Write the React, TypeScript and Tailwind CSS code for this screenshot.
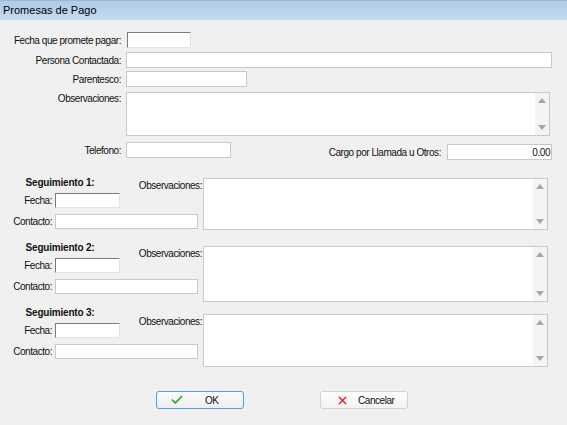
import { Check, X } from "lucide-react";

type Seg = { n: number; ta: string; lbl: string };

const segs: Seg[] = [
  { n: 1, ta: "mt-[2px] h-[52px]", lbl: "mt-[3px]" },
  { n: 2, ta: "mt-[5px] h-[56px]", lbl: "mt-[6px]" },
  { n: 3, ta: "mt-[8px] h-[53px]", lbl: "mt-[9px]" },
];

function Box({ className = "", sunken = false, children }: { className?: string; sunken?: boolean; children?: React.ReactNode }) {
  const border = sunken
    ? "border border-t-[#7a7a7a] border-l-[#7a7a7a] border-r-[#e3e3e3] border-b-[#e3e3e3]"
    : "border border-[#c9c9c9]";
  return <div className={`bg-white shrink-0 ${border} ${className}`}>{children}</div>;
}

function Memo({ className = "" }: { className?: string }) {
  return (
    <div className={`bg-white border border-[#c9c9c9] flex justify-end shrink-0 ${className}`}>
      <div className="w-[14px] bg-[#f4f4f4] flex flex-col items-center justify-between py-[5px]">
        <svg width="8" height="5" viewBox="0 0 8 5">
          <path d="M4 0 L8 5 L0 5 Z" fill="#a6a6a6" />
        </svg>
        <svg width="8" height="5" viewBox="0 0 8 5">
          <path d="M0 0 L8 0 L4 5 Z" fill="#a6a6a6" />
        </svg>
      </div>
    </div>
  );
}

function Row({ label, className = "", children }: { label: string; className?: string; children: React.ReactNode }) {
  return (
    <div className={`flex ${className}`}>
      <div className="w-[122px] flex justify-end whitespace-nowrap pr-[1px]">{label}</div>
      <div className="ml-[4px] flex flex-1">{children}</div>
    </div>
  );
}

export default function App() {
  return (
    <div
      className="w-[567px] h-[425px] bg-[#f0f0f0] text-[10px] leading-[13px] tracking-[-0.45px] text-[#111] overflow-hidden"
      style={{ fontFamily: "'Liberation Sans', Arial, sans-serif" }}
    >
      {/* title bar */}
      <div className="h-[20px] border-t border-[#9db8d5] bg-gradient-to-b from-[#b0cae5] to-[#c5dbf0] flex items-center px-[3px] text-[11px] tracking-normal text-black">
        Promesas de Pago
      </div>

      <div className="pr-[15px]">
        <Row label="Fecha que promete pagar:" className="mt-[12px] items-center">
          <Box sunken className="ml-[1px] w-[64px] h-[16px]" />
        </Row>
        <Row label="Persona Contactada:" className="mt-[4px] items-center">
          <Box className="flex-1 h-[16px]" />
        </Row>
        <Row label="Parentesco:" className="mt-[3px] items-center">
          <Box className="w-[121px] h-[16px]" />
        </Row>
        <Row label="Observaciones:" className="mt-[5px] items-start">
          <Memo className="flex-1 mr-[2px] h-[44px]" />
        </Row>
        <div className="flex items-start mt-[6px]">
          <div className="w-[122px] text-right pr-[1px] mt-[2px]">Telefono:</div>
          <Box className="ml-[4px] w-[105px] h-[16px]" />
          <div className="ml-auto flex items-center mt-[2px]">
            <span className="whitespace-nowrap">Cargo por Llamada u Otros:</span>
            <Box className="ml-[6px] w-[105px] h-[16px] flex items-center justify-end pr-[1px]">
              0.00
            </Box>
          </div>
        </div>
      </div>

      {/* seguimientos */}
      <div className="mt-[16px]">
        {segs.map((s) => (
          <div key={s.n} className="h-[65px] grid grid-cols-[137px_66px_345px] grid-rows-[32px_33px]">
            <div>
              <div className="w-[120px] text-center font-bold tracking-[-0.2px]">Seguimiento {s.n}:</div>
              <div className="flex items-center mt-[4px]">
                <div className="w-[52px] text-right">Fecha:</div>
                <Box sunken className="ml-[3px] w-[65px] h-[15px]" />
              </div>
            </div>
            <div className={`flex justify-end whitespace-nowrap pr-[1px] ${s.lbl}`}>Observaciones:</div>
            <div className="row-span-2">
              <Memo className={s.ta} />
            </div>
            <div className="col-span-2 flex items-center mt-[6px] self-start">
              <div className="w-[52px] text-right">Contacto:</div>
              <Box className="ml-[3px] w-[143px] h-[15px]" />
            </div>
          </div>
        ))}
      </div>

      {/* buttons */}
      <div className="flex gap-[76px] pl-[156px] mt-[20px]">
        <button className="w-[88px] h-[18px] rounded-[3px] border border-[#4ea2ea] bg-gradient-to-b from-[#fbfbfb] to-[#eeeeee] flex items-center pl-[13px]">
          <Check size={14} strokeWidth={2.6} color="#1f9a1f" />
          <span className="ml-[21px]">OK</span>
        </button>
        <button className="w-[88px] h-[18px] rounded-[3px] border border-[#d2d2d2] bg-gradient-to-b from-[#fdfdfd] to-[#f3f3f3] flex items-center pl-[15px]">
          <X size={13} strokeWidth={2.4} color="#e4141c" />
          <span className="ml-[9px]">Cancelar</span>
        </button>
      </div>
    </div>
  );
}
